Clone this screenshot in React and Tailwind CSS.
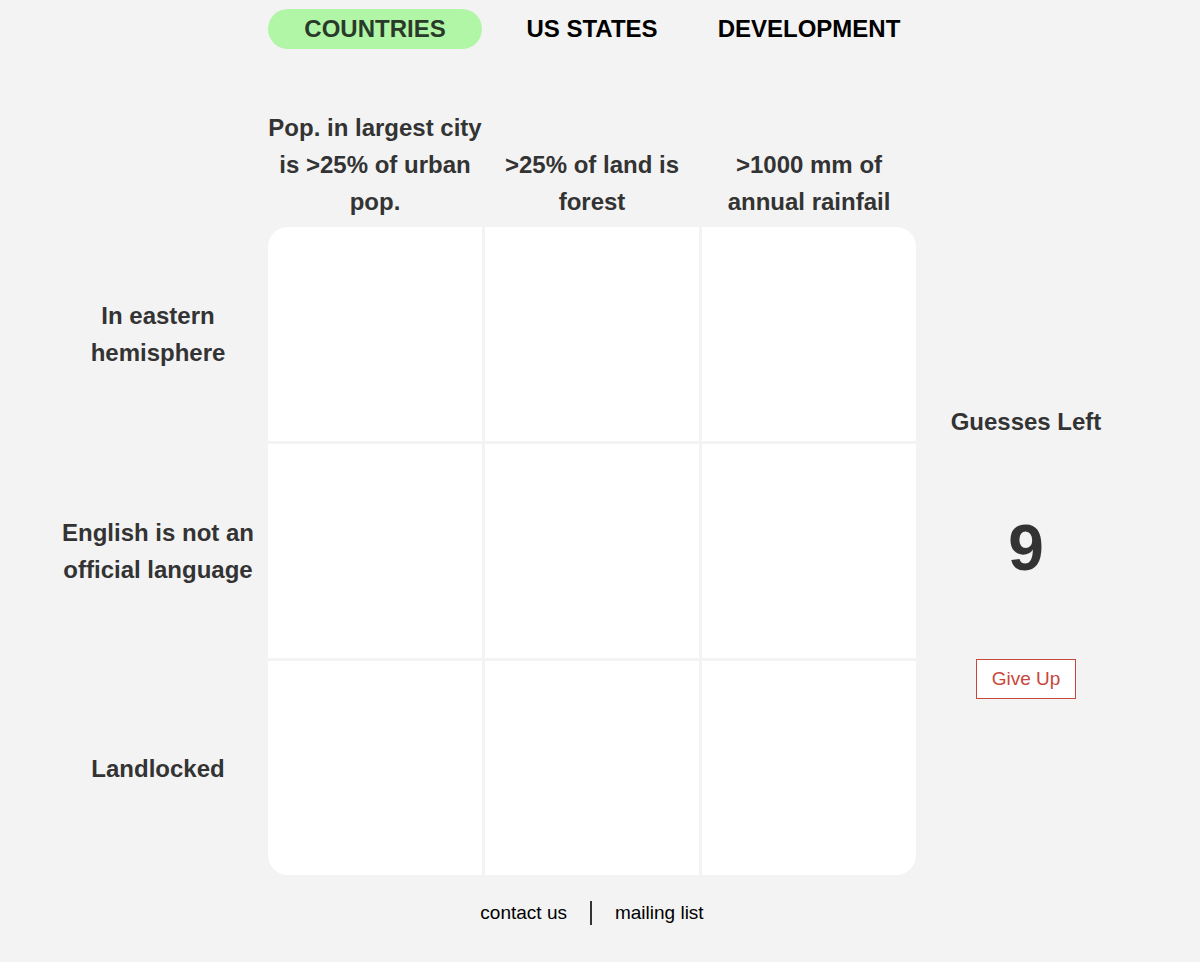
import React, { useState } from 'react';

const cols = [
  'Pop. in largest city is >25% of urban pop.',
  '>25% of land is forest',
  '>1000 mm of annual rainfail',
];

const rows = ['In eastern hemisphere', 'English is not an official language', 'Landlocked'];

const tabs = ['COUNTRIES', 'US STATES', 'DEVELOPMENT'];

const cellCorner = (r, c) => {
  if (r === 0 && c === 0) return 'rounded-tl-[20px]';
  if (r === 0 && c === 2) return 'rounded-tr-[20px]';
  if (r === 2 && c === 0) return 'rounded-bl-[20px]';
  if (r === 2 && c === 2) return 'rounded-br-[20px]';
  return '';
};

const App = () => {
  const [activeTab, setActiveTab] = useState('COUNTRIES');
  const [guesses] = useState(9);

  return (
    <div
      className="min-h-[962px] bg-[#f3f3f3] text-[#333]"
      style={{ fontFamily: '"Liberation Sans", Arial, sans-serif' }}
    >
      <div className="ml-[51px] w-[1082px]">
        {/* nav */}
        <div className="grid grid-cols-[214px_214px_214px_214px_214px] gap-x-[3px] pt-[9px]">
          <div />
          {tabs.map(tab => (
            <button
              key={tab}
              onClick={() => setActiveTab(tab)}
              className={
                'h-10 rounded-full text-[24px] font-bold ' +
                (activeTab === tab ? 'bg-[#b1f6a6] text-[#2a3a2a]' : 'text-black')
              }
            >
              {tab}
            </button>
          ))}
        </div>

        {/* board */}
        <div className="mt-[60px] grid grid-cols-[214px_214px_214px_214px_214px] grid-rows-[auto_214px_214px_214px] gap-[3px]">
          <div />
          {cols.map(col => (
            <div
              key={col}
              className="flex items-end justify-center pb-[4px] text-center text-[24px] font-bold leading-[37px]"
            >
              {col}
            </div>
          ))}
          <div />

          {rows.map((row, r) => (
            <React.Fragment key={row}>
              <div className="flex items-center justify-center text-center text-[24px] font-bold leading-[37px]">
                {row}
              </div>
              {cols.map((col, c) => (
                <div key={col} className={'bg-white ' + cellCorner(r, c)} />
              ))}
              {r === 0 && (
                <div className="row-span-3 flex flex-col items-center pt-[181px]">
                  <div className="text-[24px] font-bold leading-[28px]">Guesses Left</div>
                  <div className="mt-[80px] text-[64px] font-bold leading-none">{guesses}</div>
                  <button className="mt-[79px] h-10 w-[100px] border border-[#c8473b] bg-white text-[19px] text-[#c8473b]">
                    Give Up
                  </button>
                </div>
              )}
            </React.Fragment>
          ))}
        </div>

        {/* footer */}
        <div className="mt-[24px] grid grid-cols-[214px_214px_214px_214px_214px] gap-x-[3px]">
          <div />
          <div className="col-span-3 flex items-center justify-center gap-[23px] text-[19px] text-black">
            <a href="#">contact us</a>
            <span className="block h-[24px] w-[2px] bg-[#333]" />
            <a href="#">mailing list</a>
          </div>
        </div>
      </div>
    </div>
  );
};

export default App;
